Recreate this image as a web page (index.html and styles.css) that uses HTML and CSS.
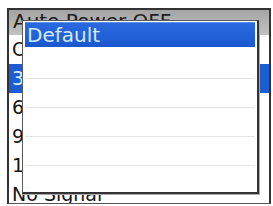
FILE: index.html
```html
<!DOCTYPE html>
<html>
<head>
<meta charset="utf-8">
<link rel="stylesheet" href="styles.css">
</head>
<body>
<div class="panel">
  <div class="header">Auto Power OFF</div>
  <ul class="list">
    <li>Off</li>
    <li class="sel">30 min</li>
    <li>60 min</li>
    <li>90 min</li>
    <li>120 min</li>
    <li>No Signal</li>
  </ul>
</div>
<div class="popup">
  <div class="opt active">Default</div>
  <div class="opt"></div>
  <div class="opt line"></div>
  <div class="opt line"></div>
  <div class="opt line"></div>
  <div class="opt line"></div>
</div>
</body>
</html>
```
FILE: styles.css
```css
html, body {
  margin: 0;
  padding: 0;
  background: #ffffff;
  width: 273px;
  height: 206px;
  overflow: hidden;
  font-family: "DejaVu Sans", "Liberation Sans", sans-serif;
}
.panel {
  box-sizing: border-box;
  margin: 8px 0 0 7px;
  width: 264px;
  height: 196px;
  border: 2px solid #333333;
  border-bottom: 1px solid #555555;
  overflow: hidden;
  background: #ffffff;
}
.header {
  height: 25px;
  line-height: 22px;
  font-size: 20px;
  color: #1e1e1e;
  padding-left: 4px;
  background: linear-gradient(#a4a4a4, #c2c2c2);
}
.list {
  list-style: none;
  margin: 0;
  padding: 0;
}
.list li {
  height: 29px;
  line-height: 28px;
  font-size: 19px;
  color: #151515;
  padding-left: 3px;
  white-space: nowrap;
}
.list li.sel {
  background: #1d5dd4;
  color: #dcecff;
}
.popup {
  position: absolute;
  left: 22px;
  top: 20px;
  box-sizing: border-box;
  width: 237px;
  height: 174px;
  background: #ffffff;
  border-left: 1px solid #5a5a5a;
  border-top: 1px solid #5a5a5a;
  border-right: 2px solid #333333;
  border-bottom: 2px solid #333333;
  box-shadow: 1px 1px 0 #aaaaaa;
  padding: 0 2px;
  overflow: hidden;
}
.opt {
  height: 29px;
  box-sizing: border-box;
}
.opt.line {
  border-top: 1px solid #e4e4e4;
}
.opt.active {
  height: 25px;
  margin: 1px 0 2px;
  padding: 2px 0 0 2px;
  line-height: 23px;
  font-size: 20px;
  color: #d6ebff;
  background: linear-gradient(#2a6ae0, #1b58cf);
  box-shadow: inset 0 1px 0 #5b8fe8;
}
```
